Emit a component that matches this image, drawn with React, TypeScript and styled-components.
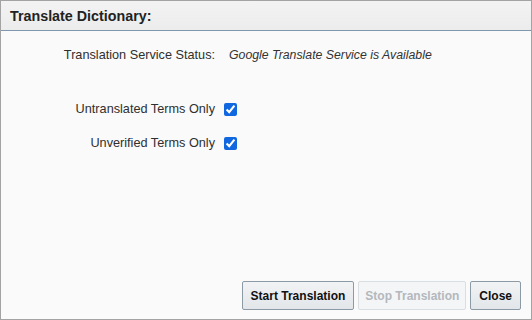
import styled, { createGlobalStyle } from 'styled-components';

const Global = createGlobalStyle`
  html, body {
    margin: 0;
    padding: 0;
    background: #ffffff;
  }
  * {
    box-sizing: border-box;
  }
`;

const Dialog = styled.div`
  width: 532px;
  height: 320px;
  display: flex;
  flex-direction: column;
  border: 1px solid #a3a3a3;
  background: #fafafa;
  font-family: 'Liberation Sans', Arial, sans-serif;
`;

const Header = styled.div`
  height: 30px;
  display: flex;
  align-items: center;
  padding-left: 9px;
  background: linear-gradient(#f3f3f3, #ececec);
  border-bottom: 1px solid #7f98b0;
  font-size: 14.3px;
  font-weight: bold;
  color: #222;
`;

const Body = styled.div`
  flex: 1;
  padding-top: 17px;
`;

const Form = styled.div`
  display: grid;
  grid-template-columns: 214px auto;
  column-gap: 9px;
  align-items: center;
`;

const Label = styled.div<{ $top?: number }>`
  text-align: right;
  font-size: 12.7px;
  color: #2f2f2f;
  height: 14px;
  line-height: 14px;
  white-space: nowrap;
  margin-top: ${(p) => p.$top ?? 0}px;
`;

const Value = styled.div`
  font-size: 12.3px;
  font-style: italic;
  color: #333;
  padding-left: 5px;
`;

const Check = styled.input.attrs({ type: 'checkbox' })<{ $top?: number }>`
  width: 13px;
  height: 13px;
  margin: ${(p) => p.$top ?? 0}px 0 0 0;
  accent-color: #1167e0;
`;

const Footer = styled.div`
  display: flex;
  justify-content: flex-end;
  gap: 4px;
  padding: 0 10px 9px 0;
`;

const Button = styled.button<{ $disabled?: boolean }>`
  height: 29px;
  padding: 0 ${(p) => (p.$disabled ? 6 : 8)}px;
  font-family: 'Liberation Sans', Arial, sans-serif;
  font-size: 12px;
  font-weight: bold;
  border-radius: 2px;
  color: ${(p) => (p.$disabled ? '#b3b8bd' : '#111')};
  border: 1px solid ${(p) => (p.$disabled ? '#d9dee3' : '#8c9aa6')};
  background: ${(p) =>
    p.$disabled ? '#f4f5f6' : 'linear-gradient(#f2f3f4, #e2e6ea)'};
`;

export default function App() {
  return (
    <>
      <Global />
      <Dialog>
        <Header>Translate Dictionary:</Header>
        <Body>
          <Form>
            <Label>Translation Service Status:</Label>
            <Value>Google Translate Service is Available</Value>
            <Label $top={40}>Untranslated Terms Only</Label>
            <Check $top={40} defaultChecked />
            <Label $top={20}>Unverified Terms Only</Label>
            <Check $top={20} defaultChecked />
          </Form>
        </Body>
        <Footer>
          <Button>Start Translation</Button>
          <Button $disabled disabled>
            Stop Translation
          </Button>
          <Button>Close</Button>
        </Footer>
      </Dialog>
    </>
  );
}
